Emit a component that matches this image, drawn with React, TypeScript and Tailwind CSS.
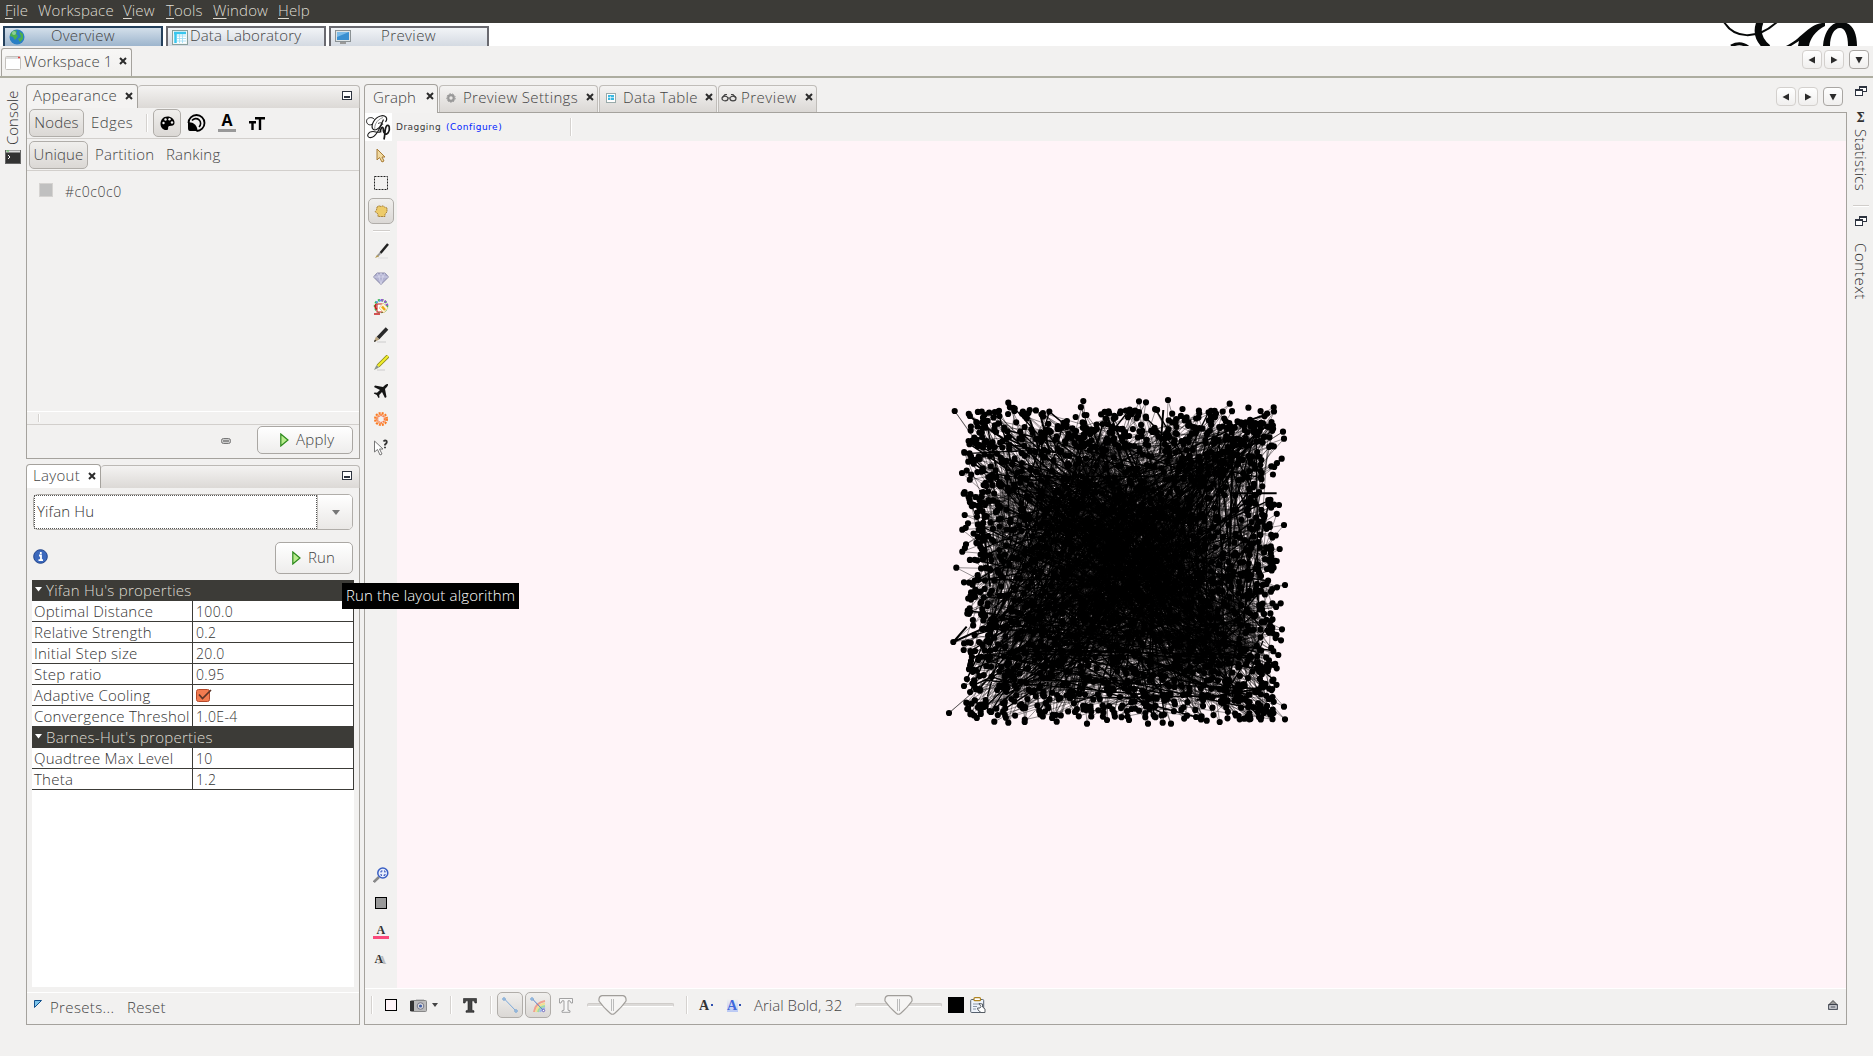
import React from "react";

const UI = "font-['Open_Sans','Noto_Sans',sans-serif] font-light tracking-[0.14px]";

/* ---------- small shared pieces ---------- */

function Close({ className = "" }: { className?: string }) {
  return (
    <svg className={"shrink-0 " + className} width="8" height="8" viewBox="0 0 8 8">
      <path d="M1 1L7 7M7 1L1 7" stroke="#2b2b2b" strokeWidth="2" />
    </svg>
  );
}

function VSep({ className = "h-[18px]" }: { className?: string }) {
  return <div className={"w-[2px] shrink-0 border-l border-[#d5d2cf] bg-white " + className} />;
}

function Play() {
  return (
    <svg width="9" height="14" viewBox="0 0 9 14" className="shrink-0">
      <path d="M0.8 1L8 7L0.8 13Z" fill="#b9eb8e" stroke="#2c8a1c" strokeWidth="1.2" />
    </svg>
  );
}

function Minimize() {
  return (
    <svg width="10" height="9" viewBox="0 0 10 9" className="shrink-0">
      <rect x="0.5" y="0.5" width="9" height="8" fill="#fff" stroke="#2e3440" />
      <rect x="2" y="5" width="6" height="2" fill="#2e3440" />
    </svg>
  );
}

function Restore() {
  return (
    <svg width="12" height="10" viewBox="0 0 12 10" className="shrink-0">
      <rect x="4.5" y="0.5" width="7" height="5" fill="#fff" stroke="#2e3440" />
      <path d="M4 1H12" stroke="#2e3440" strokeWidth="2" />
      <rect x="0.5" y="3.5" width="7" height="6" fill="#fff" stroke="#2e3440" />
      <path d="M0 4H8" stroke="#2e3440" strokeWidth="2" />
    </svg>
  );
}

function NavButton({ dir, strong = false }: { dir: "l" | "r" | "d"; strong?: boolean }) {
  const d = dir === "l" ? "M7 0.5V7.5L0.5 4Z" : dir === "r" ? "M1 0.5V7.5L7.5 4Z" : "M0.5 1H7.5L4 7.5Z";
  return (
    <div
      className={
        "flex h-[19px] w-5 shrink-0 items-center justify-center rounded-[4px] border bg-linear-to-b from-white to-[#f0efee] " +
        (strong ? "border-[#a9a6a3]" : "border-[#d3d0cd]")
      }
    >
      <svg width="8" height="8" viewBox="0 0 8 8">
        <path d={d} fill="#2b2b2b" />
      </svg>
    </div>
  );
}

/* ---------- top area ---------- */

function MenuBar() {
  return (
    <div className={"flex h-[23px] shrink-0 bg-[#3c3b37] pl-[5px] text-[15px] leading-[21px] text-[#dfdbd2] " + UI}>
      <div className="w-[33px]"><u className="underline-offset-2">F</u>ile</div>
      <div className="w-[85px]">Workspace</div>
      <div className="w-[43px]"><u className="underline-offset-2">V</u>iew</div>
      <div className="w-[47px]"><u className="underline-offset-2">T</u>ools</div>
      <div className="w-[65px]"><u className="underline-offset-2">W</u>indow</div>
      <div><u className="underline-offset-2">H</u>elp</div>
    </div>
  );
}

function BannerLogo() {
  return (
    <svg width="150" height="23" viewBox="1723 23 150 23">
      <g fill="none" stroke="#060808">
        <path d="M1724 22C1734 38 1756 41 1777 22" strokeWidth="2" />
        <path d="M1760 22C1756 32 1759 41 1768 48" strokeWidth="7" />
        <path d="M1731 46C1737 43 1743 43 1748 47" strokeWidth="3" />
      </g>
      <g fill="#060808">
        <path d="M1786 46C1800 40 1808 25 1822 23H1825V26C1815 31 1810 39 1809 46H1798L1799 41L1791 46Z" />
        <path d="M1823 46C1824 32 1831 22 1841 22C1852 22 1857 32 1857 46H1848C1848 35 1845 28 1840 28C1834 28 1830 36 1830 46Z" />
      </g>
    </svg>
  );
}

function Banner() {
  const base = "flex h-5 w-40 items-center border-2 border-b-0 bg-linear-to-b text-[15px] leading-none text-[#444] ";
  return (
    <div className={"flex h-[23px] shrink-0 items-end gap-[3px] bg-white pl-[3px] " + UI}>
      <div className={base + "border-[#24405c] from-[#d3dfea] to-[#9db5cd]"}>
        <svg width="16" height="16" viewBox="0 0 16 16" className="ml-1">
          <circle cx="8" cy="8" r="7.500" fill="#2a7fc4" />
          <path d="M2 4Q5 0 8 2L7 5L9 7L6 11L4 8L1 7ZM10 2L14 5L14 10L11 13L9 10L12 8Z" fill="#4cb04c" />
          <circle cx="5" cy="4" r="2" fill="#b9e3c9" opacity=".6" />
        </svg>
        <span className="mb-[3px] ml-[26px] tracking-[0.250px]">Overview</span>
      </div>
      <div className={base + "border-[#6a6a70] from-[#f2f4f7] to-[#d4dae2]"}>
        <svg width="16" height="15" viewBox="0 0 16 15" className="ml-1">
          <rect x="0.500" y="0.500" width="15" height="14" fill="#f0f6f6" stroke="#8aa09c" />
          <rect x="2" y="2" width="12" height="11" fill="#fff" />
          <path d="M2 3H14M3.500 3V13" stroke="#38c6ee" strokeWidth="2.500" />
          <path d="M5 6H14M5 8.500H14M5 11H14M7.500 4V13M10.500 4V13" stroke="#9adcf2" strokeWidth="0.800" />
        </svg>
        <span className="mb-[3px] ml-[2px]">Data Laboratory</span>
      </div>
      <div className={base + "border-[#6a6a70] from-[#f2f4f7] to-[#d4dae2]"}>
        <svg width="16" height="15" viewBox="0 0 16 15" className="ml-1">
          <rect x="0.500" y="0.500" width="15" height="11" fill="#dfe3e4" stroke="#8b9295" />
          <rect x="2" y="2" width="12" height="8" fill="#3a8fd0" />
          <path d="M2 2H14L2 7Z" fill="#7cbbe8" />
          <path d="M5 12H11V14H5Z" fill="#999" />
        </svg>
        <span className="mb-[3px] ml-[30px] tracking-[0.400px]">Preview</span>
      </div>
      <div className="ml-auto"><BannerLogo /></div>
    </div>
  );
}

function WorkspaceBar() {
  return (
    <div className={"flex h-8 shrink-0 items-end border-b-2 border-[#adada0] pl-px " + UI}>
      <div className="flex h-[28px] w-[131px] items-center rounded-t-[3px] border border-b-0 border-[#a5a29d] bg-linear-to-b from-[#f8f7f6] to-[#f1f0ee] pl-[3px] text-[15px] text-[#444]">
        <svg width="16" height="14" viewBox="0 0 16 14" className="shrink-0">
          <rect x="0.500" y="0.500" width="15" height="13" rx="1" fill="#fff" stroke="#c4c1bd" />
          <path d="M1 2H15" stroke="#ddd" strokeWidth="2" />
          <path d="M13 1.500H15" stroke="#d44" strokeWidth="1.500" />
        </svg>
        <span className="mb-[2px] ml-[3px] w-[95px] leading-none">Workspace 1</span>
        <Close className="-translate-y-[2px]" />
      </div>
      <div className="mb-[7px] ml-auto flex pr-[4px]">
        <NavButton dir="l" />
        <div className="w-[2px]" />
        <NavButton dir="r" />
        <div className="w-[5px]" />
        <NavButton dir="d" strong />
      </div>
    </div>
  );
}

/* ---------- left column ---------- */

function PanelHeader({ title, tabClass, textWidth }: { title: string; tabClass: string; textWidth: string }) {
  return (
    <div className="flex h-[24px] shrink-0 items-end">
      <div className={"flex h-[24px] shrink-0 items-center rounded-t-[4px] border border-b-0 border-[#a5a29d] pb-[2px] pl-[6px] text-[15px] leading-none " + tabClass}>
        <span className={"shrink-0 " + textWidth}>{title}</span>
        <Close />
      </div>
      <div className="flex h-[23px] flex-1 items-center justify-end rounded-t-[4px] border-x border-t border-[#bcb9b5] border-l-0 bg-linear-to-b from-[#f4f3f2] to-[#dcd9d6] pr-[7px] pb-[3px]">
        <Minimize />
      </div>
    </div>
  );
}

const PRESSED = "rounded-[5px] border border-[#b0ada9] bg-linear-to-b from-[#f0efed] to-[#dbd8d5]";

function Appearance() {
  return (
    <div className="flex h-[375px] shrink-0 flex-col">
      <PanelHeader title="Appearance" tabClass="w-[112px] bg-[#f4f3f2]" textWidth="w-[92px] tracking-[0.300px]" />
      <div className="flex min-h-0 flex-1 flex-col border border-t-0 border-[#a5a29d] text-[15px]">
        <div className="flex h-[31px] shrink-0 items-center border-b border-[#d2cfcc] pl-[2px]">
          <div className={"flex h-7 w-[55px] items-center justify-center pb-px " + PRESSED}>Nodes</div>
          <span className="ml-[7px] w-[55px] pb-px tracking-[0.400px]">Edges</span>
          <VSep />
          <div className={"ml-[5px] flex h-7 w-7 items-center justify-center " + PRESSED}>
            <svg width="15" height="15" viewBox="0 0 15 15">
              <path d="M7.500 0.500C3 0.500 0.500 4 0.500 8C0.500 12 4 14.500 7 14C9 13.700 7.500 11.500 8.500 10.500C10 9 14 11 14.500 7C14.800 3 11 0.500 7.500 0.500Z" />
              <g fill="#eee"><circle cx="3.500" cy="7" r="1.200" /><circle cx="5.500" cy="3.500" r="1.200" /><circle cx="9.500" cy="3.300" r="1.200" /><circle cx="12" cy="6.500" r="1.200" /></g>
            </svg>
          </div>
          <svg width="19" height="18" viewBox="0 0 19 18" className="ml-[6px]">
            <path d="M1.500 9A8 8 0 1 1 9.500 17" fill="none" stroke="#000" strokeWidth="1.800" />
            <path d="M5 6.500A4.800 4.800 0 1 1 12 13" fill="none" stroke="#000" strokeWidth="1.600" />
            <path d="M1 8.500C5 7.500 10.500 11 10.500 17H3C1.500 17 1 16 1 14Z" />
          </svg>
          <div className="ml-[12px] flex w-[18px] flex-col items-center">
            <span className="h-[13px] font-['Open_Sans',sans-serif] text-[16px] leading-[13px] font-bold text-black">A</span>
            <div className="mt-[2px] h-[3px] w-[18px] bg-[#999]" />
          </div>
          <svg width="16" height="13" viewBox="0 0 16 13" className="mt-px ml-[13px]">
            <path d="M6 1.200H16M11 1V13M0 5.200H7M3.500 5V13" stroke="#000" strokeWidth="2.400" />
          </svg>
        </div>
        <div className="flex h-[32px] shrink-0 items-center border-b border-[#d2cfcc] pl-[2px]">
          <div className={"flex h-7 w-[59px] items-center justify-center " + PRESSED}>Unique</div>
          <span className="ml-[7px] w-[71px] tracking-[0.250px]">Partition</span>
          <span className="tracking-[0.200px]">Ranking</span>
        </div>
        <div className="flex flex-1 items-start border-b border-white pt-[12px] pl-[12px]">
          <div className="h-[14px] w-[14px] border border-[#d5d3d1] bg-[#c0c0c0]" />
          <span className="mt-px ml-[12px] text-[14px] leading-[16px] tracking-[0.550px]">#c0c0c0</span>
        </div>
        <div className="flex h-[13px] shrink-0 items-center border-b border-[#d2cfcc] pl-[11px]"><VSep className="h-[8px]" /></div>
        <div className="flex h-[33px] shrink-0 items-start pt-px pr-[6px]">
          <svg width="10" height="6" viewBox="0 0 10 6" className="mt-[12px] ml-auto">
            <rect x="0.500" y="0.500" width="9" height="5" rx="2" fill="#ccc" stroke="#777" />
            <path d="M2 3H8" stroke="#555" />
          </svg>
          <div className="ml-[26px] flex h-7 w-[96px] items-center rounded-[5px] border border-[#aaa7a3] bg-linear-to-b from-white to-[#eeedec] pb-px pl-[22px]">
            <Play /><span className="ml-[7px] tracking-[0.250px]">Apply</span>
          </div>
        </div>
      </div>
    </div>
  );
}

function PropHeader({ children }: { children: React.ReactNode }) {
  return (
    <div className="flex h-[21px] items-start bg-[#3c3b37] pl-[3px] text-[#dfdbd2]">
      <svg width="7" height="5" viewBox="0 0 7 5" className="mt-[7px]"><path d="M0 0H7L3.500 4.500Z" fill="#fff" /></svg>
      <span className="ml-[4px] leading-[20px] tracking-[0.260px]">{children}</span>
    </div>
  );
}

function PropRow({ name, children }: { name: string; children: React.ReactNode }) {
  return (
    <div className="flex h-[21px] border-r border-b border-[#3c3b37] text-[#333]">
      <div className="w-[161px] shrink-0 border-r border-[#3c3b37] pl-[2px] leading-[20px] tracking-[0.240px] whitespace-nowrap">{name}</div>
      <div className="flex items-center pl-[3px] text-[14px] leading-[19px] tracking-[0.350px]">{children}</div>
    </div>
  );
}

function Layout() {
  return (
    <div className="mt-[5px] flex h-[561px] shrink-0 flex-col">
      <PanelHeader title="Layout" tabClass="w-[75px] bg-white" textWidth="w-[55px] tracking-[0.300px]" />
      <div className="flex min-h-0 flex-1 flex-col border border-t-0 border-[#a5a29d] pt-[6px] text-[15px]">
        <div className="mx-[6px] flex h-9 shrink-0 rounded-[5px] border border-[#b0ada9] bg-white">
          <div className="flex-1 border border-dotted border-[#555] pl-[2px] leading-[31px] text-[#333]">Yifan Hu</div>
          <div className="flex w-[35px] items-center justify-center rounded-r-[4px] border-l border-[#c4c1bd] bg-linear-to-b from-white to-[#eae8e6] pl-[2px]">
            <svg width="8" height="5" viewBox="0 0 8 5"><path d="M0 0H8L4 5Z" fill="#777" /></svg>
          </div>
        </div>
        <div className="mx-[6px] mt-[12px] flex h-[32px] shrink-0 items-center">
          <svg width="15" height="15" viewBox="0 0 15 15" className="-mt-[4px]">
            <circle cx="7.500" cy="7.500" r="6.800" fill="#3c69bd" stroke="#20448c" />
            <path d="M7.800 3V5M6 6.500H8V11M5.500 11.200H10" stroke="#fff" strokeWidth="1.800" fill="none" />
          </svg>
          <div className="ml-auto flex h-[32px] w-[78px] items-center rounded-[5px] border border-[#aaa7a3] bg-linear-to-b from-white to-[#eeedec] pb-px pl-[16px]">
            <Play /><span className="ml-[7px]">Run</span>
          </div>
        </div>
        <div className="mx-[5px] mt-[6px] h-[407px] shrink-0 bg-white">
          <PropHeader>Yifan Hu's properties</PropHeader>
          <PropRow name="Optimal Distance">100.0</PropRow>
          <PropRow name="Relative Strength">0.2</PropRow>
          <PropRow name="Initial Step size">20.0</PropRow>
          <PropRow name="Step ratio">0.95</PropRow>
          <PropRow name="Adaptive Cooling">
            <svg width="16" height="15" viewBox="0 0 16 15">
              <rect x="0.500" y="1.500" width="13" height="12" rx="2" fill="#f37b50" stroke="#b5492a" />
              <path d="M3 6.500L6.500 10.500L15 2" fill="none" stroke="#5c3427" strokeWidth="1.700" />
            </svg>
          </PropRow>
          <PropRow name="Convergence Threshol">1.0E-4</PropRow>
          <PropHeader>Barnes-Hut's properties</PropHeader>
          <PropRow name="Quadtree Max Level">10</PropRow>
          <PropRow name="Theta">1.2</PropRow>
        </div>
        <div className="mt-[5px] flex flex-1 items-start border-t border-white pt-[7px] pl-[7px]">
          <svg width="8" height="8" viewBox="0 0 8 8"><path d="M0.500 0.500H7.500L0.500 7.500Z" fill="#7cc4ea" stroke="#12508c" /></svg>
          <span className="-mt-px ml-[8px] w-[77px] leading-[16px] tracking-[0.350px]">Presets...</span>
          <span className="-mt-px leading-[16px] tracking-[0.300px]">Reset</span>
        </div>
      </div>
    </div>
  );
}

/* ---------- graph window ---------- */

function GTab({ cls, icon, label, labelCls }: { cls: string; icon?: React.ReactNode; label: string; labelCls: string }) {
  return (
    <div className={"flex shrink-0 items-center rounded-t-[4px] border border-b-0 text-[15px] leading-none whitespace-nowrap " + cls}>
      {icon}
      <span className={"shrink-0 " + labelCls}>{label}</span>
      <Close className="-translate-y-px" />
    </div>
  );
}

const IDLE = "h-[27px] border-[#c0bdb9] bg-linear-to-b from-[#f4f3f2] to-[#dbd8d5] pb-[3px] ";

function GraphTabs() {
  return (
    <div className="flex h-[29px] shrink-0 items-end border-b border-[#a5a29d]">
      <GTab cls="z-10 -mb-px h-[29px] w-[74px] border-[#a5a29d] bg-[#f3f2f1] pb-[4px] pl-[8px]" label="Graph" labelCls="w-[53px]" />
      <GTab
        cls={IDLE + "ml-px w-[159px] pl-[6px]"}
        icon={
          <svg width="10" height="10" viewBox="0 0 10 10"><circle cx="5" cy="5" r="2.800" fill="none" stroke="#999" strokeWidth="2.200" /><circle cx="5" cy="5" r="4.300" fill="none" stroke="#999" strokeDasharray="1.500 1.500" /></svg>
        }
        label="Preview Settings"
        labelCls="ml-[7px] w-[123px] tracking-[0.340px]"
      />
      <GTab
        cls={IDLE + "ml-px w-[118px] pl-[6px]"}
        icon={
          <svg width="10" height="10" viewBox="0 0 10 10"><rect x="0.500" y="0.500" width="9" height="9" fill="#fff" stroke="#9aa" /><rect x="2" y="2" width="6" height="5" fill="#3bb8e0" /><path d="M2 4.500H8M4.500 3V7" stroke="#fff" strokeWidth=".6" /></svg>
        }
        label="Data Table"
        labelCls="ml-[7px] w-[82px] tracking-[0.300px]"
      />
      <GTab
        cls={IDLE + "ml-px w-[99px] pl-[2px]"}
        icon={
          <svg width="16" height="9" viewBox="0 0 16 9"><g fill="none" stroke="#444" strokeWidth="1.200"><ellipse cx="4" cy="5.500" rx="3" ry="2.300" /><ellipse cx="12" cy="5.500" rx="3" ry="2.300" /><path d="M1 5L4 1.500H6M15 5L12 1.500H10M7 5H9" /></g></svg>
        }
        label="Preview"
        labelCls="ml-[4px] w-[64px] tracking-[0.500px]"
      />
      <div className="mb-[6px] ml-auto flex pr-[4px]">
        <NavButton dir="l" />
        <div className="w-[2px]" />
        <NavButton dir="r" />
        <div className="w-[5px]" />
        <NavButton dir="d" strong />
      </div>
    </div>
  );
}

function GephiMark() {
  return (
    <svg width="27" height="28" viewBox="0 0 27 28" className="shrink-0 bg-white">
      <g fill="none" stroke="#1a1a1a">
        <path d="M7 11.500C3 13 0.500 9.500 2 6.500C3.500 4 8 4 9.500 6.500" strokeWidth="1" />
        <path d="M20.500 9C23.500 5 20 1.500 15.500 3C9 5 6 12 7.500 15.500C9 18.500 14 16.500 16 12L18.500 6.500" strokeWidth="1.200" />
        <path d="M18 4.500C11 7 9 13 10 17" strokeWidth=".8" stroke="#777" />
        <path d="M13 10.500C16 9 18.500 10 17.500 12" strokeWidth=".8" />
        <path d="M17 11L12.500 19C10 23 7 25 4.500 24.500C1 23.500 3 18.500 8 18.500C11 18.500 12 20 15 19" strokeWidth="1.100" />
        <path d="M15.500 19.500C15 15 18 12.500 18.300 16C18.300 21 21.500 22.500 23.300 19.500C25.500 15 24 11.500 22 12.500C19.500 14 20.500 20 19 26.500" strokeWidth="1.700" />
      </g>
    </svg>
  );
}

function Tool({ children }: { children: React.ReactNode }) {
  return <div className="flex h-[28px] w-8 shrink-0 items-center justify-center">{children}</div>;
}

function ToolColumn() {
  return (
    <div className="flex w-8 shrink-0 flex-col">
      <Tool>
        <svg width="10" height="15" viewBox="0 0 10 15"><path d="M1 1V12L3.500 9.500L6 14L8 13L6 9H9Z" fill="#f0d9a0" stroke="#a97c35" /></svg>
      </Tool>
      <Tool>
        <svg width="14" height="14" viewBox="0 0 14 14"><rect x="0.500" y="0.500" width="13" height="13" fill="none" stroke="#222" strokeDasharray="2 1" /></svg>
      </Tool>
      <Tool>
        <div className={"flex h-[26px] w-[26px] items-center justify-center " + PRESSED}>
          <svg width="14" height="12" viewBox="0 0 14 12"><path d="M3 2L5 0.800L7 1.500L9 0.800L10.500 2L13 3V7L11 9V11.500H4V9L1 6.500L2.500 5Z" fill="#edcb6a" stroke="#9b7228" strokeDasharray="2 .5" strokeWidth=".8" /></svg>
        </div>
      </Tool>
      <div className="mx-auto mt-[5px] mb-[5px] h-[2px] w-[17px] shrink-0 border-t border-[#d0cdca] bg-white" />
      <Tool>
        <svg width="15" height="16" viewBox="0 0 15 16"><path d="M4 15H14" stroke="#ddd" /><path d="M14 1L6.500 10" stroke="#222" strokeWidth="2.500" /><path d="M6.500 10L3.500 13" stroke="#999" strokeWidth="2" /><path d="M1 15L3 12L5 13.500Z" fill="#b59a50" /></svg>
      </Tool>
      <Tool>
        <svg width="16" height="14" viewBox="0 0 16 14"><path d="M4 1H12L15.500 5L8 12.500L0.500 5Z" fill="#b3b3d2" stroke="#77779a" strokeWidth=".8" /><path d="M0.500 5H15.500M4 1L6 5L8 12L10 5L12 1M6 5L8 1L10 5" stroke="#e0e0f2" strokeWidth=".6" fill="none" /></svg>
      </Tool>
      <Tool>
        <svg width="16" height="16" viewBox="0 0 16 16"><circle cx="8" cy="7" r="6" fill="none" stroke="#39c04a" strokeWidth="2.500" strokeDasharray="2 1.500" /><path d="M8 1A6 6 0 0 1 14 8" fill="none" stroke="#9c55cf" strokeWidth="2.500" strokeDasharray="2 1.500" /><path d="M3 3.500L8 1" stroke="#5a9be0" strokeWidth="2" strokeDasharray="2 1.500" /><rect x="4" y="5" width="6" height="8" fill="#fff" stroke="#c81e1e" /><path d="M10 4L15 9L11 14L6 9Z" fill="#fdf3dc" stroke="#e0c88a" strokeWidth=".8" /><path d="M9 7.500L12 11" stroke="#eba914" strokeWidth="2.500" /><path d="M3 5Q1 9 4 10M1 15H7" stroke="#c81e1e" strokeWidth="1.600" fill="none" /></svg>
      </Tool>
      <Tool>
        <svg width="16" height="16" viewBox="0 0 16 16"><path d="M4 15H13" stroke="#ccc" /><path d="M14 1.500L5 11" stroke="#2a2a2a" strokeWidth="3.600" /><path d="M1 15L3 9.500L6.500 12.500Z" fill="#b7a27d" /><path d="M1 15L1.800 12.800L3.300 14Z" fill="#111" /></svg>
      </Tool>
      <Tool>
        <svg width="16" height="16" viewBox="0 0 16 16"><path d="M4 15H12" stroke="#ccc" /><path d="M15 1L5 11" stroke="#8d8b1c" strokeWidth="3.800" /><path d="M15 1L5 11" stroke="#f2ee2c" strokeWidth="2.200" /><path d="M1 15L3.500 10L6 12.500Z" fill="#8a9488" /></svg>
      </Tool>
      <Tool>
        <svg width="16" height="16" viewBox="0 0 16 16"><path d="M15 1C13.500 0.500 11.500 2.500 10 4L2 2.500L1 4L7 7L4 9.800L1.500 9.500L0.800 10.500L3.800 12L5.500 15L6.500 14.500L6.200 12L9 9L12 15L13.500 14L12 6C13.500 4.500 15.500 2.500 15 1Z" fill="#151515" /></svg>
      </Tool>
      <Tool>
        <svg width="14" height="14" viewBox="0 0 14 14" fill="none"><circle cx="7" cy="7" r="6" stroke="#fb7b24" strokeWidth="2" strokeDasharray="2 1.140" /><circle cx="7" cy="7" r="3.400" stroke="#fc6a35" strokeWidth="1.200" strokeDasharray="1.500 .63" /><circle cx="7" cy="7" r="4.700" stroke="#fb8a40" strokeWidth="1" /></svg>
      </Tool>
      <Tool>
        <svg width="16" height="17" viewBox="0 0 16 17"><path d="M1.500 2V13L4.500 10.500L7 16L9 15L6.500 10H10Z" fill="#fff" stroke="#777" /><path d="M10.500 2.500Q12 0.500 13.500 2Q14.500 4 12 5.500V6.500M12 7.800V9.200" fill="none" stroke="#333" strokeWidth="1.800" /></svg>
      </Tool>
      <div className="flex-1" />
      <Tool>
        <svg width="16" height="16" viewBox="0 0 16 16"><path d="M0.800 15L6 10" stroke="#888" strokeWidth="2.600" /><circle cx="9.800" cy="6" r="5" fill="#e9effc" stroke="#3a5fc4" strokeWidth="1.500" /><path d="M8 5.500V4H9.500M11 4H12V5.500M12 7V8.300H10.500M9 8.300H8V7" fill="none" stroke="#2848b8" /></svg>
      </Tool>
      <Tool>
        <div className="h-3 w-3 border border-black bg-[#999]" />
      </Tool>
      <Tool>
        <div className="mt-[2px] flex flex-col items-center">
          <span className="h-[10px] font-['Liberation_Serif',serif] text-[12px] leading-[9px] font-bold text-[#333]">A</span>
          <div className="h-[3px] w-4 bg-[#fb4a7c]" />
        </div>
      </Tool>
      <Tool>
        <span className="mr-1 font-['Liberation_Serif',serif] text-[12px] leading-none font-bold text-[#333] [text-shadow:3px_1px_0_#bbb]">A</span>
      </Tool>
      <div className="h-[15px] shrink-0" />
    </div>
  );
}

/* Deterministic random layout of nodes and edges inside a square. */
function makeGraph() {
  let s = 20117;
  const r = () => {
    s = (s * 1664525 + 1013904223) % 4294967296;
    return s / 4294967296;
  };
  const outer = [
    74, 93, 235, 68, 460, 63, 627, 64, 648, 67, 714, 60, 899, 71, 1031, 82, 1059, 155, 1062, 176, 1055, 236, 1047, 375, 1062, 435, 1049, 507,
    1040, 543, 1065, 615, 1041, 622, 1052, 670, 1056, 748, 1053, 781, 1045, 825, 1040, 865, 1062, 980, 1065, 1018, 57, 999, 70, 786, 79, 563, 97, 515,
    108, 493, 97, 449, 96, 279, 103, 218, 115, 245, 101, 341, 104, 405, 102, 607, 101, 810, 102, 918, 109, 968, 123, 998, 193, 1025, 235, 1028,
    284, 1026, 380, 1025, 471, 1031, 531, 1020, 597, 1020, 654, 1031, 698, 1028, 723, 1031, 830, 1022, 869, 1026, 929, 1018, 958, 1018,
  ];
  const fmt = (n: number) => n.toFixed(1);
  const rim: number[][] = [];
  for (let i = 0; i < outer.length; i += 2) rim.push([outer[i] / 3, outer[i + 1] / 3]);
  const pts: number[][] = [];
  for (let i = 0; i < 1650; i++) pts.push([38 + r() * 306, 30 + r() * 308]);
  for (let i = 0; i < 90; i++) {
    pts.push([40 + r() * 304, 27 + r() * 38], [40 + r() * 304, 340 - r() * 32], [34 + r() * 28, 30 + r() * 305], [347 - r() * 28, 30 + r() * 310]);
  }
  const hubs = [
    [200, 185], [215, 200], [190, 150], [130, 105], [305, 255], [318, 250], [275, 300], [180, 250], [150, 250], [75, 295],
    [210, 130], [302, 70], [125, 130], [230, 175], [270, 235], [160, 245], [240, 220], [300, 265], [140, 200], [205, 215],
    [90, 90], [170, 80], [250, 100], [80, 240], [90, 170], [270, 140], [120, 290], [200, 110],
  ];
  let nodes = "";
  for (const [x, y] of [...rim, ...pts]) {
    nodes += `M${fmt(x - 3.1)} ${fmt(y)}a3.1 3.1 0 1 0 6.2 0a3.1 3.1 0 1 0-6.2 0`;
  }
  let thin = "";
  let thick = "";
  for (let i = 0; i < 2700; i++) {
    const a = pts[Math.floor(r() * pts.length)];
    const h = hubs[Math.floor(r() * hubs.length)];
    const seg = `M${fmt(a[0])} ${fmt(a[1])}L${fmt(h[0] + (r() - 0.5) * 50)} ${fmt(h[1] + (r() - 0.5) * 50)}`;
    if (r() < 0.11) thick += seg;
    else thin += seg;
  }
  for (const a of rim) {
    for (let k = 0; k < 2; k++) {
      const tx = a[0] + (190 - a[0]) * 0.25 + (r() - 0.5) * 40;
      const ty = a[1] + (180 - a[1]) * 0.25 + (r() - 0.5) * 40;
      thin += `M${fmt(a[0])} ${fmt(a[1])}L${fmt(tx)} ${fmt(ty)}`;
    }
  }
  return { nodes, thin, thick };
}

const GRAPH = makeGraph();

function NetworkDrawing() {
  return (
    <svg width="380" height="360" viewBox="0 0 380 360" className="absolute top-[239px] left-[533px]">
      <path d={GRAPH.thin} stroke="#000" strokeWidth="0.420" fill="none" />
      <path d={GRAPH.thick} stroke="#000" strokeWidth="1.400" fill="none" />
      <path
        d="M70 786L110 740M70 786L160 745M1040 340L900 340M120 110L300 230M330 100L360 220M530 100L580 260M550 130L640 330M150 330L180 620M1020 920L800 960M910 140L900 500M900 140L1020 100M300 120L340 250M700 90L690 220"
        transform="scale(.3333)"
        stroke="#000"
        strokeWidth="6"
      />
      <path d={GRAPH.nodes} fill="#000" />
    </svg>
  );
}

function Slider({ handle }: { handle: string }) {
  return (
    <div className="relative h-[26px] w-[87px] shrink-0">
      <div className="mt-[11px] h-[4px] rounded-[2px] border border-[#cfccc9] border-b-white bg-[#dcdad8]" />
      <svg width="29" height="20" viewBox="0 0 29 20" className={"absolute top-[3px] " + handle}>
        <path d="M4 0.700H25Q28.500 1.500 28 6Q24 12 16.500 18.500Q14.500 20 12.500 18.500Q5 12 1 6Q0.500 1.500 4 0.700Z" fill="#f6f5f4" stroke="#a09d99" strokeWidth="1.200" />
        <path d="M13.500 4V16M15.500 4V16" stroke="#bbb" />
      </svg>
    </div>
  );
}

function BottomBar() {
  return (
    <div className="flex h-[36px] shrink-0 items-center border-t border-white pb-[3px] pl-[6px]">
      <VSep />
      <div className="ml-[12px] h-3 w-3 border border-black bg-[#fff4f8]" />
      <svg width="17" height="13" viewBox="0 0 17 13" className="ml-[13px]">
        <rect x="0.500" y="1.500" width="16" height="11" rx="1" fill="#bbb" stroke="#888" />
        <rect x="0" y="2" width="4" height="10" fill="#333" />
        <circle cx="10.500" cy="7" r="3.300" fill="#ddd" stroke="#778" />
        <circle cx="10.500" cy="7" r="1.600" fill="#3f5da6" />
        <path d="M6 0.500H14" stroke="#ccc" />
      </svg>
      <svg width="6" height="4" viewBox="0 0 6 4" className="ml-[5px]"><path d="M0 0H6L3 4Z" fill="#444" /></svg>
      <VSep className="ml-[12px] h-[18px]" />
      <svg width="14" height="15" viewBox="0 0 14 15" className="ml-[11px]"><path d="M0.500 0.500H13.500V5H12L11 2.800H9V12.200L11 12.800V14.300H3V12.800L5 12.200V2.800H3L2 5H0.500Z" fill="#444" stroke="#222" strokeWidth=".6" /></svg>
      <VSep className="ml-[13px] h-[18px]" />
      <div className={"ml-[5px] flex h-[26px] w-[26px] items-center justify-center " + PRESSED}>
        <svg width="16" height="16" viewBox="0 0 16 16"><path d="M2 1.500L14 14" stroke="#7aa9dc" /><circle cx="2" cy="2" r="1.200" fill="#fff" stroke="#5a92cc" /><circle cx="14" cy="14" r="1.200" fill="#fff" stroke="#5a92cc" /></svg>
      </div>
      <div className={"ml-[2px] flex h-[26px] w-[26px] items-center justify-center " + PRESSED}>
        <svg width="16" height="16" viewBox="0 0 16 16" fill="none"><path d="M4 15Q5 6 15 4" stroke="#f0a090" strokeWidth="2" /><path d="M6 15Q7 8 15 6.500" stroke="#f4df90" strokeWidth="2" /><path d="M8 15Q9 10 15 9" stroke="#a0dca0" strokeWidth="2" /><path d="M10 15Q11 12 15 11" stroke="#a0b8ec" strokeWidth="2" /><path d="M2 1.500L13 13" stroke="#5a82cc" /><circle cx="2" cy="2" r="1.200" fill="#fff" stroke="#5a92cc" /><circle cx="13.500" cy="13.500" r="1.200" fill="#fff" stroke="#6a62bc" /></svg>
      </div>
      <svg width="14" height="15" viewBox="0 0 14 15" className="ml-[8px]"><path d="M0.500 0.500H13.500V5H12L11 2.800H9V12.200L11 12.800V14.300H3V12.800L5 12.200V2.800H3L2 5H0.500Z" fill="#f8f8f8" stroke="#999" strokeWidth=".9" /></svg>
      <div className="w-[14px]" />
      <Slider handle="left-[11px]" />
      <VSep className="ml-[12px] h-[18px]" />
      <span className="ml-[11px] w-[11px] font-['Liberation_Serif',serif] text-[14px] font-bold text-[#333]">A</span>
      <div className="mb-[1px] ml-px h-[2px] w-[2px] bg-[#2f4fb0]" />
      <span className="ml-[14px] w-[11px] bg-linear-to-t from-[#b9c8f4] to-transparent font-['Liberation_Serif',serif] text-[14px] leading-[13px] font-bold text-[#3f68dc]">A</span>
      <div className="mb-[1px] ml-px h-[2px] w-[2px] bg-[#2f4fb0]" />
      <span className="ml-[13px] w-[101px] text-[15px] tracking-normal">Arial Bold, 32</span>
      <Slider handle="left-[29px]" />
      <div className="ml-[6px] h-4 w-4 bg-black" />
      <svg width="16" height="17" viewBox="0 0 16 17" className="ml-[6px]">
        <rect x="0.700" y="2.500" width="13" height="13" rx="1" fill="#eef3fa" stroke="#55606e" />
        <rect x="4" y="0.700" width="6.500" height="3" rx="1" fill="#fff" stroke="#b08420" strokeWidth="1.200" />
        <path d="M3 7H9M3 9.500H7M3 12H6" stroke="#8a97a8" />
        <path d="M9 6.500L11 9.500L10 11H7.500L8 13L11 15.500H15V12L12.500 10V7Z" fill="#fff" stroke="#4a5058" strokeWidth=".9" />
      </svg>
      <svg width="10" height="10" viewBox="0 0 10 10" className="mr-[8px] ml-auto">
        <path d="M5 0.500L9 4.500H1Z" fill="#999" stroke="#333" strokeWidth=".8" />
        <rect x="0.700" y="4.700" width="8.600" height="4.600" fill="#e4e4e8" stroke="#2e3440" />
        <path d="M2.500 7H7.500" stroke="#2e3440" />
      </svg>
    </div>
  );
}

function GraphWindow() {
  return (
    <div className="mt-[6px] ml-[4px] flex h-[941px] w-[1483px] shrink-0 flex-col">
      <GraphTabs />
      <div className="flex min-h-0 flex-1 flex-col border border-t-0 border-[#a5a29d]">
        <div className="flex h-7 shrink-0 items-center">
          <GephiMark />
          <span className="mt-px ml-[4px] w-[50px] font-['DejaVu_Sans',sans-serif] text-[9px] font-normal tracking-[0.450px] text-[#3c3c3c]">Dragging</span>
          <span className="mt-px w-[124px] font-['DejaVu_Sans',sans-serif] text-[9px] font-normal tracking-[0.500px] text-[#0022ff]">(Configure)</span>
          <VSep />
        </div>
        <div className="flex min-h-0 flex-1">
          <ToolColumn />
          <div className="relative min-w-0 flex-1 overflow-hidden bg-[#fff4f8]">
            <NetworkDrawing />
          </div>
        </div>
        <BottomBar />
      </div>
    </div>
  );
}

/* ---------- page ---------- */

export default function App() {
  return (
    <div className={"relative flex h-[1056px] w-[1873px] flex-col overflow-hidden bg-[#f2f1f0] text-[15px] text-[#444] " + UI}>
      <MenuBar />
      <Banner />
      <WorkspaceBar />
      <div className="flex min-h-0 flex-1">
        <div className="flex w-[26px] shrink-0 flex-col items-center pt-[17px] pr-[2px]">
          <span className="h-[50px] rotate-180 text-right leading-[20px] tracking-normal text-[#333] [writing-mode:vertical-rl]">Console</span>
          <svg width="16" height="14" viewBox="0 0 16 14" className="mt-[5px] ml-[2px]">
            <rect x="0.500" y="0.500" width="15" height="13" fill="#333" stroke="#666" />
            <path d="M1 1.500H15" stroke="#ddd" strokeWidth="2" />
            <path d="M3 5L5 7L3 9" stroke="#fff" fill="none" />
            <path d="M1.500 1H4" stroke="#5b5" />
          </svg>
        </div>
        <div className="mt-[6px] w-[334px] shrink-0">
          <Appearance />
          <Layout />
        </div>
        <GraphWindow />
        <div className="flex flex-1 flex-col items-center pt-[8px] pl-px text-[#333]">
          <Restore />
          <span className="mt-[13px] h-[18px] font-['DejaVu_Serif',serif] text-[12px] leading-[18px] font-bold">Σ</span>
          <span className="mt-[2px] h-[76px] leading-[20px] tracking-[0.300px] [writing-mode:vertical-rl]">Statistics</span>
          <div className="h-[2px] w-4 shrink-0 border-t border-[#d0cdca] bg-white" />
          <div className="h-[9px] shrink-0" />
          <Restore />
          <span className="mt-[17px] leading-[20px] tracking-[0.600px] [writing-mode:vertical-rl]">Context</span>
        </div>
      </div>
      <div className="absolute top-[583px] left-[342px] flex h-[26px] w-[177px] items-center bg-black pb-[2px] pl-[4px] leading-none tracking-[0.150px] whitespace-nowrap text-white">
        Run the layout algorithm
      </div>
    </div>
  );
}
